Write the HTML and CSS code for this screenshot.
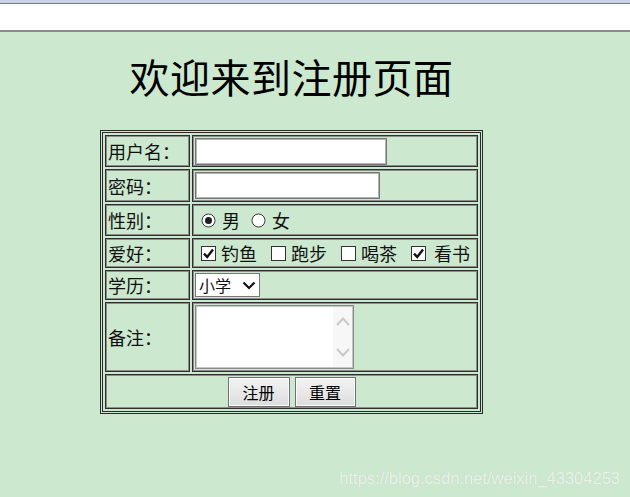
FILE: index.html
```html
<!DOCTYPE html>
<html lang="zh-CN">
<head>
<meta charset="utf-8">
<title>注册页面</title>
<link rel="stylesheet" href="styles.css">
</head>
<body>
<div class="chrome"><div class="address"></div></div>
<div class="page">
  <h1 class="title">欢迎来到注册页面</h1>
  <table class="form">
    <tr class="r1">
      <td class="label">用户名：</td>
      <td class="field"><div class="cell"><input class="text w-user" type="text"></div></td>
    </tr>
    <tr class="r2">
      <td class="label">密码：</td>
      <td class="field"><div class="cell"><input class="text w-pass" type="password"></div></td>
    </tr>
    <tr class="r3">
      <td class="label">性别：</td>
      <td class="field"><div class="cell">
        <svg class="radio first" width="15" height="15" viewBox="0 0 15 15"><circle cx="7.5" cy="7.5" r="6.5" fill="#fff" stroke="#3a3a3a"/><circle cx="7.5" cy="7.5" r="3.5" fill="#1e1e1e"/></svg><span class="opt-text">男</span>
        <svg class="radio" width="15" height="15" viewBox="0 0 15 15"><circle cx="7.5" cy="7.5" r="6.5" fill="#fff" stroke="#3a3a3a"/></svg><span class="opt-text">女</span>
      </div></td>
    </tr>
    <tr class="r4">
      <td class="label">爱好：</td>
      <td class="field"><div class="cell">
        <svg class="check first" width="15" height="15" viewBox="0 0 15 15"><rect x="0.5" y="0.5" width="14" height="14" fill="#fff" stroke="#333"/><path d="M3 7.6 L6.2 11 L12 3.6" fill="none" stroke="#111" stroke-width="2.4"/></svg><span class="opt-text">钓鱼</span>
        <svg class="check" width="15" height="15" viewBox="0 0 15 15"><rect x="0.5" y="0.5" width="14" height="14" fill="#fff" stroke="#333"/></svg><span class="opt-text">跑步</span>
        <svg class="check" width="15" height="15" viewBox="0 0 15 15"><rect x="0.5" y="0.5" width="14" height="14" fill="#fff" stroke="#333"/></svg><span class="opt-text">喝茶</span>
        <svg class="check" width="15" height="15" viewBox="0 0 15 15"><rect x="0.5" y="0.5" width="14" height="14" fill="#fff" stroke="#333"/><path d="M3 7.6 L6.2 11 L12 3.6" fill="none" stroke="#111" stroke-width="2.4"/></svg><span class="opt-text wide">看书</span>
      </div></td>
    </tr>
    <tr class="r5">
      <td class="label">学历：</td>
      <td class="field"><div class="cell">
        <span class="select"><span class="select-text">小学</span><svg class="chev" width="14" height="9" viewBox="0 0 14 9"><path d="M1.5 1.5 L7 7 L12.5 1.5" fill="none" stroke="#111" stroke-width="2.2"/></svg></span>
      </div></td>
    </tr>
    <tr class="r6">
      <td class="label">备注：</td>
      <td class="field"><div class="cell">
        <div class="textarea"><div class="ta-main"></div><div class="ta-scroll">
          <svg width="16" height="12" viewBox="0 0 16 12"><path d="M2 10 L8 3.5 L14 10" fill="none" stroke="#c9c9c9" stroke-width="2"/></svg>
          <svg width="16" height="12" viewBox="0 0 16 12"><path d="M2 2 L8 8.5 L14 2" fill="none" stroke="#c9c9c9" stroke-width="2"/></svg>
        </div></div>
      </div></td>
    </tr>
    <tr class="r7">
      <td class="buttons" colspan="2"><div class="btnrow">
        <button class="btn b1" type="button">注册</button>
        <button class="btn b2" type="button">重置</button>
      </div></td>
    </tr>
  </table>
</div>
<div class="watermark">https://blog.csdn.net/weixin_43304253</div>
</body>
</html>
```
FILE: styles.css
```css
html, body {
  margin: 0;
  padding: 0;
  background: #cce8cf;
  height: 100%;
}
body {
  position: relative;
  font-family: "Noto Sans CJK SC", "Noto Sans", sans-serif;
  color: #111;
  overflow: hidden;
}
.chrome {
  border-top: 3px solid #c7d3e5;
}
.address {
  height: 26px;
  background: #fff;
  border-top: 1px solid #7a7a7a;
  border-bottom: 2px solid #8b8b8b;
}
.page {
  width: 383px;
  margin-left: 100px;
}
.title {
  margin: 24px 0 34px;
  font-size: 40px;
  line-height: 40px;
  font-weight: 400;
  text-align: center;
  color: #000;
  letter-spacing: 0.5px;
}
.form {
  width: 383px;
  border: 3px double #2a2a2a;
  border-spacing: 2px;
  table-layout: fixed;
  font-size: 18px;
}
.form td {
  box-sizing: border-box;
  border: 1px solid #2e2e2e;
  box-shadow: inset 0 0 0 1px #8c8c8c;
  padding: 0 2px;
  vertical-align: middle;
}
.label {
  width: 85px;
  white-space: nowrap;
  line-height: 24px;
}
.r1 { height: 32px; }
.r2 { height: 33px; }
.r3 { height: 32px; }
.r4 { height: 30px; }
.r5 { height: 30px; }
.r6 { height: 70px; }
.r7 { height: 35px; }
.cell {
  display: flex;
  align-items: center;
  white-space: nowrap;
  line-height: 24px;
}
.text {
  box-sizing: border-box;
  height: 27px;
  margin: 0;
  border: 1px solid #767676;
  box-shadow: inset 0 0 0 1px #b4b4b4;
  background: #fff;
  outline: none;
}
.w-user { width: 192px; }
.w-pass { width: 185px; }
.radio, .check {
  flex: none;
  margin-left: 11px;
  margin-right: 6px;
}
.check { margin-left: 14px; margin-right: 5px; }
.radio.first, .check.first { margin-left: 6px; }
.opt-text.wide { margin-left: 3px; }
.select {
  box-sizing: border-box;
  display: inline-flex;
  align-items: center;
  justify-content: space-between;
  width: 65px;
  height: 24px;
  padding: 0 3px 0 3px;
  background: #fff;
  border: 1px solid #767676;
  font-size: 16px;
}
.select-text { line-height: 20px; }
.textarea {
  box-sizing: border-box;
  display: flex;
  width: 159px;
  height: 64px;
  background: #fff;
  border: 1px solid #8a8a8a;
  box-shadow: inset 0 0 0 1px #c6c6c6;
}
.ta-main { flex: 1; }
.ta-scroll {
  width: 19px;
  margin: 1px 1px 1px 0;
  background: #f7f7f7;
  display: flex;
  flex-direction: column;
  align-items: center;
  justify-content: space-between;
  padding: 8px 0 8px;
}
.buttons { text-align: center; }
.btnrow {
  display: flex;
  justify-content: center;
  gap: 5px;
}
.btn {
  box-sizing: border-box;
  height: 30px;
  padding: 0;
  margin: 0;
  font-family: "Noto Sans CJK SC", sans-serif;
  font-size: 16px;
  color: #000;
  border: 1px solid #707070;
  box-shadow: inset 0 0 0 1px #fafafa;
  background: linear-gradient(#f3f3f3, #dddddd);
}
.b1 { width: 62px; }
.b2 { width: 61px; }
.watermark {
  position: absolute;
  right: 10px;
  bottom: 9px;
  font-family: "Liberation Sans", Arial, sans-serif;
  font-size: 16.5px;
  color: rgba(255, 255, 255, 0.72);
  text-shadow: 0 0 1px rgba(0, 0, 0, 0.12);
}
```
